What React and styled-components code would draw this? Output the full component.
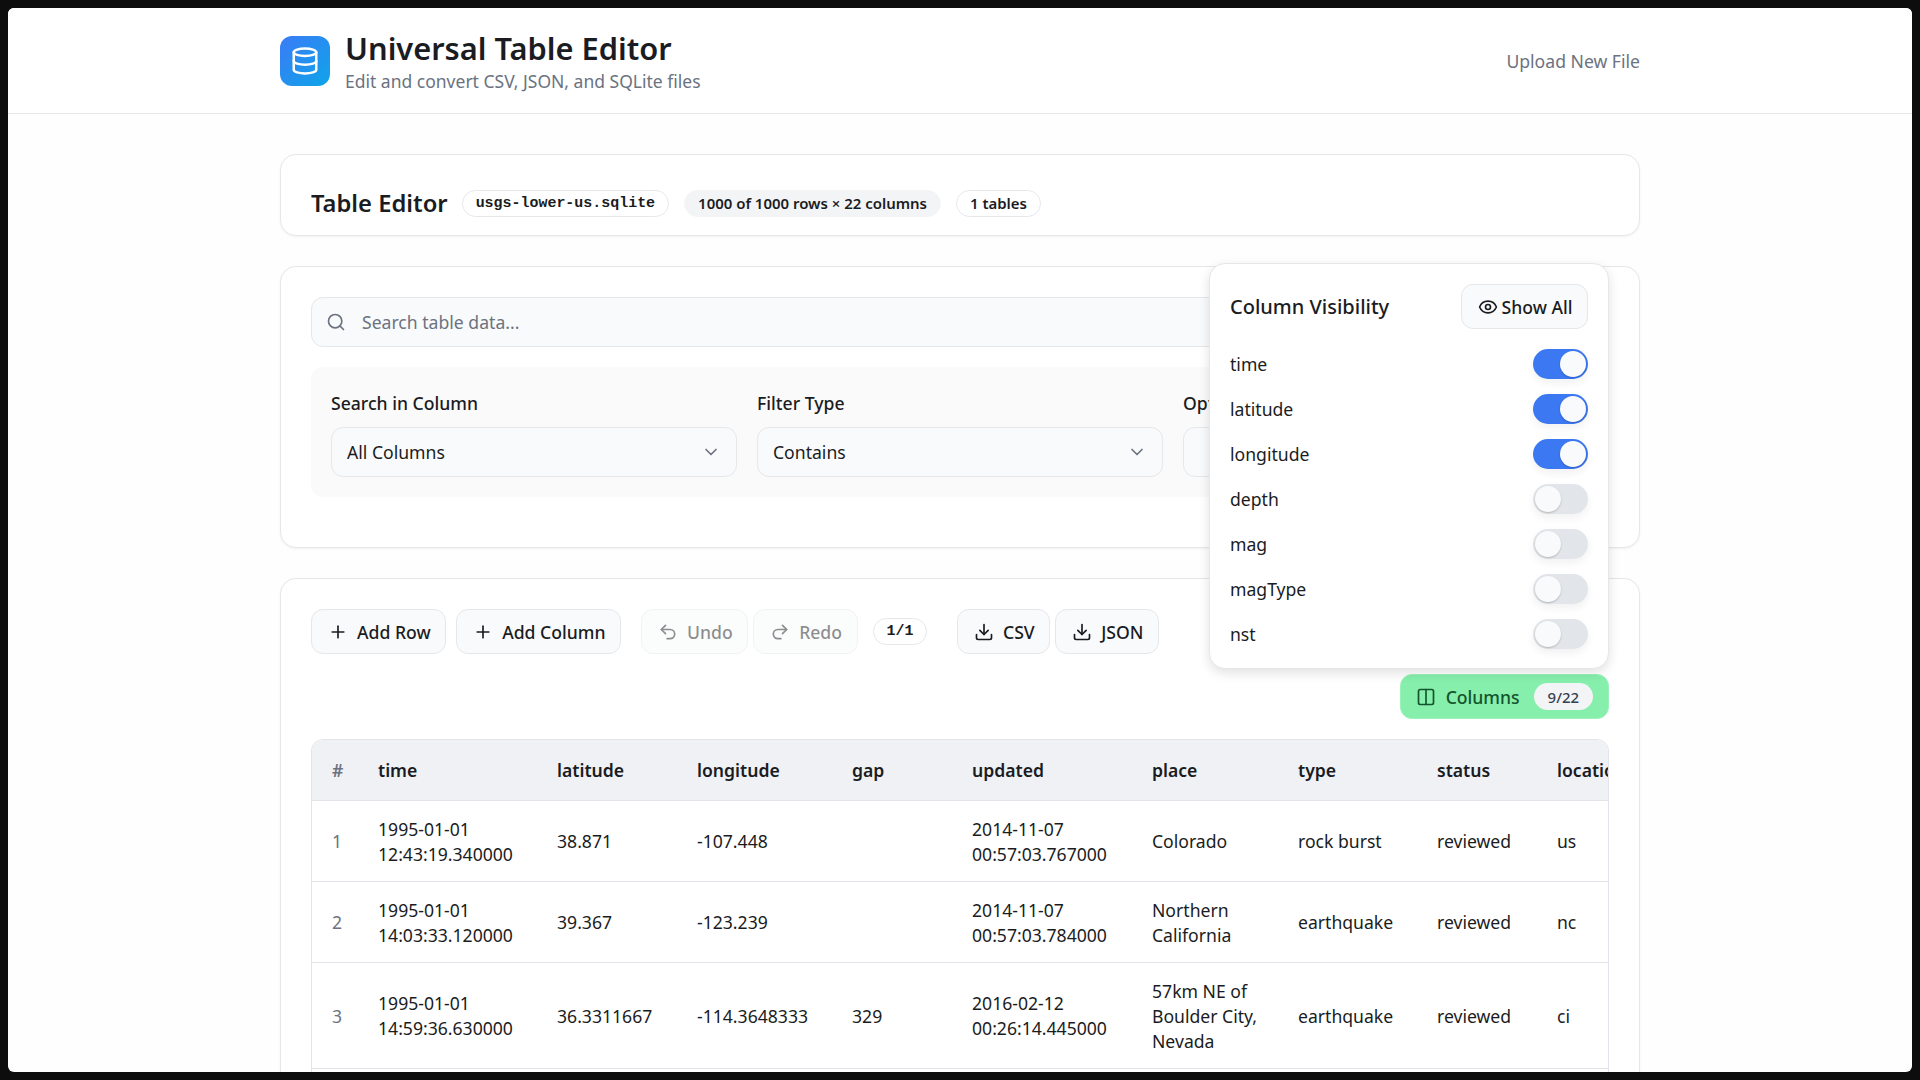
import React from 'react';
import styled, { createGlobalStyle } from 'styled-components';
import { Database, Search, ChevronDown, Plus, Undo2, Redo2, Download, Columns2, Eye } from 'lucide-react';

const GlobalStyle = createGlobalStyle`
  html, body {
    margin: 0;
    height: 100%;
    overflow: hidden;
    background: #0d0d0d;
  }
  * {
    box-sizing: border-box;
  }
  body {
    font-family: 'Noto Sans', sans-serif;
    font-size: 17.6px;
    color: #1a1c22;
  }
`;

const Window = styled.div`
  margin: 8px;
  height: 1064px;
  overflow: hidden;
  background: #fefefe;
  border-radius: 6px;
`;

const Header = styled.header`
  height: 106px;
  background: #fff;
  border-bottom: 1px solid #e5e7eb;
  padding: 0 272px;
  display: flex;
  align-items: center;
  justify-content: space-between;
`;

const Brand = styled.div`
  display: flex;
  align-items: center;
  gap: 15px;
`;

const BrandText = styled.div`
  padding-top: 3px;
`;

const Logo = styled.div`
  width: 50px;
  height: 50px;
  border-radius: 12px;
  background: linear-gradient(135deg, #3b7bf6, #0ea5e9);
  color: #fff;
  display: flex;
  align-items: center;
  justify-content: center;
`;

const AppTitle = styled.h1`
  margin: 0;
  font-size: 30.8px;
  line-height: 36px;
  font-weight: 600;
`;

const AppSubtitle = styled.p`
  margin: 1px 0 0;
  font-size: 17.5px;
  line-height: 28px;
  color: #6b7280;
`;

const UploadLink = styled.span`
  color: #6b7280;
`;

const Main = styled.main`
  width: 1360px;
  margin: 40px auto 0;
  display: flex;
  flex-direction: column;
  gap: 30px;
`;

const Card = styled.section`
  background: #fff;
  border: 1px solid #e5e7eb;
  border-radius: 16px;
  box-shadow: 0 1px 3px rgba(0, 0, 0, 0.05);
  padding: ${(p) => p.$padding || '30px'};
`;

const TitleRow = styled.div`
  display: flex;
  align-items: center;
  gap: 15px;
`;

const EditorTitle = styled.h2`
  margin: 0 -1px 0 0;
  font-size: 23.76px;
  line-height: 36px;
  font-weight: 600;
`;

const Pill = styled.span`
  display: inline-flex;
  align-items: center;
  height: 27px;
  padding: 0 13px;
  border-radius: 14px;
  font-size: 14.96px;
  font-weight: 600;
  border: 1px solid ${(p) => (p.$grey ? '#f3f4f6' : '#e5e7eb')};
  background: ${(p) => (p.$grey ? '#f3f4f6' : '#fff')};
  color: #1a1c22;
`;

const MonoPill = styled(Pill)`
  font-family: 'Liberation Mono', monospace;
  font-weight: 700;
  padding-bottom: 1px;
`;

const SearchBox = styled.div`
  height: 50px;
  display: flex;
  align-items: center;
  gap: 16px;
  padding: 0 14px;
  background: #f9fafb;
  border: 1px solid #e5e7eb;
  border-radius: 12px;
  color: #6b7280;
`;

const FilterPanel = styled.div`
  margin-top: 20px;
  margin-bottom: 20px;
  padding: 20px;
  background: #fafafa;
  border-radius: 12px;
  display: grid;
  grid-template-columns: repeat(3, 1fr);
  gap: 20px;
`;

const Field = styled.div`
  display: flex;
  flex-direction: column;
  gap: 8px;
`;

const FieldLabel = styled.label`
  line-height: 32px;
  height: 32px;
  font-weight: 500;
`;

const Select = styled.div`
  height: 50px;
  padding: 0 15px;
  display: flex;
  align-items: center;
  justify-content: space-between;
  background: #f9fafb;
  border: 1px solid #e5e7eb;
  border-radius: 12px;
  color: #6b7280;

  span {
    color: #1a1c22;
  }
`;

const Toolbar = styled.div`
  display: flex;
  align-items: center;
  height: 45px;
`;

const Group = styled.div`
  display: flex;
  align-items: center;
  gap: ${(p) => p.$gap || 5}px;
  margin-right: ${(p) => p.$after || 0}px;
`;

const Button = styled.button`
  height: 45px;
  padding: 0 14.5px 0 16px;
  display: inline-flex;
  align-items: center;
  gap: ${(p) => p.$gap || 9}px;
  font-family: inherit;
  font-size: 17.6px;
  font-weight: 500;
  background: #f9fafb;
  border: 1px solid #e5e7eb;
  border-radius: 12px;
  color: #1a1c22;
  opacity: ${(p) => (p.disabled ? 0.5 : 1)};
`;

const ColumnsRow = styled.div`
  position: relative;
  display: flex;
  justify-content: flex-end;
  margin-top: 20px;
`;

const ColumnsButton = styled(Button)`
  background: #86efac;
  border-color: #9df2ba;
  color: #14532d;
  padding: 0 15px;
  gap: 10px;
`;

const CountBadge = styled.span`
  margin-left: 4px;
  height: 27px;
  padding: 0 14px;
  border-radius: 14px;
  background: #f3f4f6;
  color: #374151;
  font-size: 14.96px;
  display: inline-flex;
  align-items: center;
`;

const Popover = styled.div`
  position: absolute;
  right: 0;
  bottom: calc(100% + 5px);
  width: 400px;
  padding: 20px 20px 19px;
  background: #fff;
  border: 1px solid #e5e7eb;
  border-radius: 16px;
  box-shadow: 0 4px 12px rgba(0, 0, 0, 0.12);
  z-index: 5;
`;

const PopoverHead = styled.div`
  display: flex;
  align-items: center;
  justify-content: space-between;
  margin-bottom: 20px;
`;

const PopoverTitle = styled.h3`
  margin: 0;
  font-size: 20px;
  font-weight: 500;
`;

const ToggleRow = styled.div`
  height: 30px;
  display: flex;
  align-items: center;
  justify-content: space-between;
  margin-bottom: ${(p) => (p.$last ? 0 : 15)}px;
`;

const Toggle = styled.span`
  width: 55px;
  height: 30px;
  padding: 2px;
  border-radius: 15px;
  display: flex;
  justify-content: ${(p) => (p.$on ? 'flex-end' : 'flex-start')};
  background: ${(p) => (p.$on ? '#3b78f2' : '#e2e5e9')};
  box-shadow: 0 4px 8px rgba(0, 0, 0, 0.06);

  &::after {
    content: '';
    width: 26px;
    height: 26px;
    border-radius: 50%;
    background: #f9fafb;
    box-shadow: 0 1px 2px rgba(0, 0, 0, 0.2);
  }
`;

const TableWrap = styled.div`
  margin-top: 20px;
  border: 1px solid #e2e4ea;
  border-radius: 12px 12px 0 0;
  overflow: hidden;
`;

const Table = styled.table`
  width: 1356px;
  table-layout: fixed;
  border-collapse: collapse;
  font-size: 17.6px;
`;

const Th = styled.th`
  height: 60px;
  padding: 0 20px;
  text-align: left;
  font-weight: 600;
  background: #eff1f5;
  border-bottom: 1px solid #e2e4ea;
  color: ${(p) => (p.$muted ? '#6b7280' : '#1a1c22')};
  white-space: nowrap;
`;

const Td = styled.td`
  padding: 16px 20px 14px;
  line-height: 25px;
  border-bottom: 1px solid #e2e4ea;
  color: ${(p) => (p.$muted ? '#6b7280' : '#1a1c22')};
`;

const columnWidths = [46, 179, 140, 155, 120, 180, 146, 139, 120, 131];
const headers = ['time', 'latitude', 'longitude', 'gap', 'updated', 'place', 'type', 'status', 'location'];

const rows = [
  ['1995-01-01 12:43:19.340000', '38.871', '-107.448', '', '2014-11-07 00:57:03.767000', 'Colorado', 'rock burst', 'reviewed', 'us'],
  ['1995-01-01 14:03:33.120000', '39.367', '-123.239', '', '2014-11-07 00:57:03.784000', 'Northern California', 'earthquake', 'reviewed', 'nc'],
  ['1995-01-01 14:59:36.630000', '36.3311667', '-114.3648333', '329', '2016-02-12 00:26:14.445000', '57km NE of Boulder City, Nevada', 'earthquake', 'reviewed', 'ci'],
];

const visibility = [
  ['time', true],
  ['latitude', true],
  ['longitude', true],
  ['depth', false],
  ['mag', false],
  ['magType', false],
  ['nst', false],
];

export default function App() {
  return (
    <>
      <GlobalStyle />
      <Window>
        <Header>
          <Brand>
            <Logo>
              <Database size={30} strokeWidth={2} />
            </Logo>
            <BrandText>
              <AppTitle>Universal Table Editor</AppTitle>
              <AppSubtitle>Edit and convert CSV, JSON, and SQLite files</AppSubtitle>
            </BrandText>
          </Brand>
          <UploadLink>Upload New File</UploadLink>
        </Header>

        <Main>
          <Card $padding="30px 30px 14px">
            <TitleRow>
              <EditorTitle>Table Editor</EditorTitle>
              <MonoPill>usgs-lower-us.sqlite</MonoPill>
              <Pill $grey>1000 of 1000 rows × 22 columns</Pill>
              <Pill>1 tables</Pill>
            </TitleRow>
          </Card>

          <Card>
            <SearchBox>
              <Search size={20} />
              Search table data...
            </SearchBox>
            <FilterPanel>
              <Field>
                <FieldLabel>Search in Column</FieldLabel>
                <Select>
                  <span>All Columns</span>
                  <ChevronDown size={20} />
                </Select>
              </Field>
              <Field>
                <FieldLabel>Filter Type</FieldLabel>
                <Select>
                  <span>Contains</span>
                  <ChevronDown size={20} />
                </Select>
              </Field>
              <Field>
                <FieldLabel>Options</FieldLabel>
                <Select />
              </Field>
            </FilterPanel>
          </Card>

          <Card>
            <Toolbar>
              <Group $gap={10} $after={20}>
                <Button>
                  <Plus size={20} />
                  Add Row
                </Button>
                <Button>
                  <Plus size={20} />
                  Add Column
                </Button>
              </Group>
              <Group $after={15}>
                <Button disabled>
                  <Undo2 size={20} />
                  Undo
                </Button>
                <Button disabled>
                  <Redo2 size={20} />
                  Redo
                </Button>
              </Group>
              <Group $after={29.5}>
                <MonoPill>1/1</MonoPill>
              </Group>
              <Group>
                <Button>
                  <Download size={20} />
                  CSV
                </Button>
                <Button>
                  <Download size={20} />
                  JSON
                </Button>
              </Group>
            </Toolbar>
            <ColumnsRow>
              <Popover>
                <PopoverHead>
                  <PopoverTitle>Column Visibility</PopoverTitle>
                  <Button $gap={4}>
                    <Eye size={20} />
                    Show All
                  </Button>
                </PopoverHead>
                {visibility.map(([name, on], i) => (
                  <ToggleRow key={name} $last={i === visibility.length - 1}>
                    {name}
                    <Toggle $on={on} />
                  </ToggleRow>
                ))}
              </Popover>
              <ColumnsButton>
                <Columns2 size={20} />
                Columns
                <CountBadge>9/22</CountBadge>
              </ColumnsButton>
            </ColumnsRow>
            <TableWrap>
              <Table>
                <colgroup>
                  {columnWidths.map((w, i) => (
                    <col key={i} width={w} />
                  ))}
                </colgroup>
                <thead>
                  <tr>
                    <Th $muted>#</Th>
                    {headers.map((h) => (
                      <Th key={h}>{h}</Th>
                    ))}
                  </tr>
                </thead>
                <tbody>
                  {rows.map((row, i) => (
                    <tr key={i}>
                      <Td $muted>{i + 1}</Td>
                      {row.map((cell, j) => (
                        <Td key={j}>{cell}</Td>
                      ))}
                    </tr>
                  ))}
                  <tr>
                    <Td colSpan={10} />
                  </tr>
                </tbody>
              </Table>
            </TableWrap>
          </Card>
        </Main>
      </Window>
    </>
  );
}
